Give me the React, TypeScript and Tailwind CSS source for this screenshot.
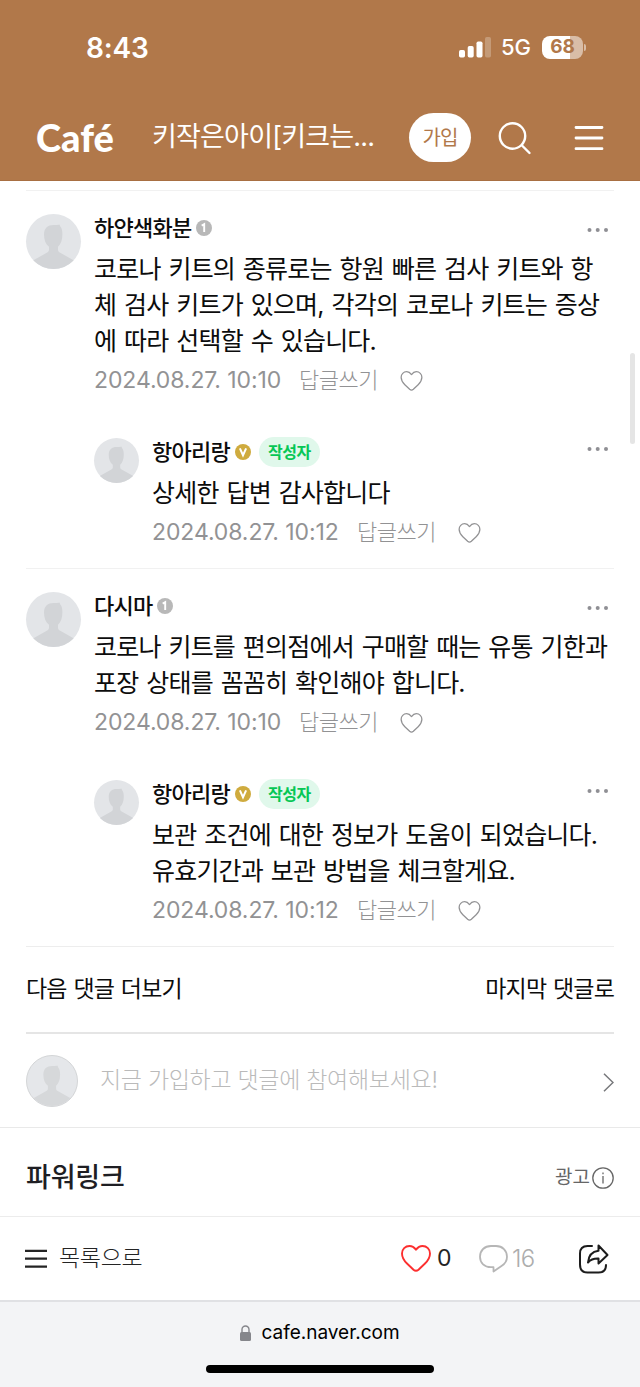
import { ReactNode } from 'react';

type Comment = {
  name: string;
  badge: 'level' | 'manager';
  author?: boolean;
  lines: string[];
  date: string;
};

const threads: { comment: Comment; reply: Comment }[] = [
  {
    comment: {
      name: '하얀색화분',
      badge: 'level',
      lines: [
        '코로나 키트의 종류로는 항원 빠른 검사 키트와 항',
        '체 검사 키트가 있으며, 각각의 코로나 키트는 증상',
        '에 따라 선택할 수 있습니다.',
      ],
      date: '2024.08.27. 10:10',
    },
    reply: {
      name: '항아리랑',
      badge: 'manager',
      author: true,
      lines: ['상세한 답변 감사합니다'],
      date: '2024.08.27. 10:12',
    },
  },
  {
    comment: {
      name: '다시마',
      badge: 'level',
      lines: ['코로나 키트를 편의점에서 구매할 때는 유통 기한과', '포장 상태를 꼼꼼히 확인해야 합니다.'],
      date: '2024.08.27. 10:10',
    },
    reply: {
      name: '항아리랑',
      badge: 'manager',
      author: true,
      lines: ['보관 조건에 대한 정보가 도움이 되었습니다.', '유효기간과 보관 방법을 체크할게요.'],
      date: '2024.08.27. 10:12',
    },
  },
];

function Avatar({ className }: { className: string }) {
  return (
    <svg viewBox="0 0 55 55" className={`shrink-0 rounded-full bg-[#e3e5e8] text-[#d2d4d7] ${className}`}>
      <path
        fill="currentColor"
        d="M18 20.5c0-6.500 4-9.500 9.500-9.500 2.500 0 4.500-.5 6.500-.3-.3.8-.1 1.400.4 1.900 1.500 1.900 2 4.400 2 7.900 0 5.500-1.600 9.500-4.400 12.300v3c0 1.200.6 2 1.800 2.700L48 46.500V55H7v-8.500l14.200-8c1.200-.7 1.800-1.500 1.800-2.700v-3c-3.400-2.800-5-6.800-5-12.300z"
      />
    </svg>
  );
}

function LevelBadge() {
  return (
    <svg viewBox="0 0 16 16" className="h-4 w-4">
      <circle cx="8" cy="8" r="8" fill="#b8b8b8" />
      <path d="M5.700 5.600 8.200 4.200V12" fill="none" stroke="#fff" strokeWidth="1.900" />
    </svg>
  );
}

function ManagerBadge() {
  return (
    <svg viewBox="0 0 16 16" className="h-4 w-4">
      <circle cx="8" cy="8" r="8" fill="#cfab3e" />
      <path d="M4.900 4.300 8 11.200l3.100-6.900" fill="none" stroke="#fff" strokeWidth="2" />
    </svg>
  );
}

function HeartIcon({ className, strokeWidth }: { className: string; strokeWidth: number }) {
  return (
    <svg viewBox="0 0 30 27" className={className} fill="none" stroke="currentColor" strokeWidth={strokeWidth} strokeLinejoin="round">
      <path d="M15 4.800C12.800 1.800 10.500 1 8.500 1 4.200 1 1 4.300 1 8.500 1 12.500 3 15.600 6 18.500l6.500 6.200c1.800 1.600 3.200 1.600 5 0l6.500-6.200c3-2.900 5-6 5-10C29 4.300 25.800 1 21.500 1c-2 0-4.300.8-6.500 3.800z" />
    </svg>
  );
}

function CommentBody({ comment, more, children }: { comment: Comment; more: string; children?: ReactNode }) {
  return (
    <div className="min-w-0 flex-1">
      <div className="flex h-[30px] items-center">
        <span className="mr-[5px] text-[22px] font-medium tracking-[-0.75px]">{comment.name}</span>
        {comment.badge === 'level' ? <LevelBadge /> : <ManagerBadge />}
        {comment.author && (
          <span className="ml-2 flex h-[30px] items-center rounded-full bg-[#e0f8eb] px-[9px] text-[16px] font-bold tracking-[-0.4px] text-[#06c755]">
            작성자
          </span>
        )}
        <svg viewBox="0 0 22 4" className={`ml-auto mr-[5px] h-1 w-[22px] ${more}`} fill="#8f8f94">
          <circle cx="2.500" cy="2" r="2" />
          <circle cx="10.700" cy="2" r="2" />
          <circle cx="19" cy="2" r="2" />
        </svg>
      </div>
      <div className="mt-2 text-[25px] leading-9 tracking-[-0.8px] whitespace-nowrap [word-spacing:1.6px]">
        {comment.lines.map((line) => (
          <p key={line}>{line}</p>
        ))}
      </div>
      <div className="mt-1.5 flex h-[30px] items-center text-[#929294]">
        <span className="w-[205px] text-[23px] tracking-[-0.1px] whitespace-nowrap">{comment.date}</span>
        <span className="w-[101px] text-[22px] font-light tracking-[-0.5px]">답글쓰기</span>
        <HeartIcon className="mt-0.5 h-5 w-[23px]" strokeWidth={1.7} />
      </div>
      {children}
    </div>
  );
}

export default function App() {
  return (
    <div className="relative flex h-[1387px] w-[640px] flex-col overflow-hidden bg-white font-['Inter','Noto_Sans_CJK_KR',sans-serif] text-[#0c0c0c]">
      <header className="h-[181px] shrink-0 border-b border-[#a86f42] bg-[#b1784a] text-white">
        <div className="flex h-[95px] items-center pr-[54px] pl-[86px]">
          <span className="text-[28px] font-semibold tracking-[-0.2px]">8:43</span>
          <svg viewBox="0 0 32 21" className="ml-auto h-[21px] w-8" fill="#fff">
            <rect x="0" y="13" width="6" height="7.500" rx="1.700" />
            <rect x="8.700" y="9" width="6" height="11.500" rx="1.700" />
            <rect x="17.500" y="4.500" width="6" height="16" rx="1.700" />
            <rect x="26" y="0" width="6" height="20.500" rx="1.700" opacity=".25" />
          </svg>
          <span className="ml-2.5 text-[22px] font-medium">5G</span>
          <div className="ml-[11px] flex items-center">
            <div className="flex h-[23px] w-[41px] items-center justify-center rounded-[8px] bg-linear-to-r from-white from-68% to-[#d9bda7] to-68% text-[19px] font-bold text-[#b1784a]">
              68
            </div>
            <span className="ml-px h-[7px] w-[2px] rounded-r-full bg-[#d9bda7]" />
          </div>
        </div>
        <div className="flex h-[85px] items-center pr-9 pl-9">
          <span className="w-[116px] font-['Lato',sans-serif] text-[38px] font-black">Café</span>
          <span className="w-[257px] text-[27px] tracking-[-0.8px] whitespace-nowrap">키작은아이[키크는...</span>
          <span className="flex h-[49px] w-[62px] items-center justify-center rounded-[25px] bg-white text-[20px] tracking-[-0.8px] text-[#b1784a]">
            가입
          </span>
          <svg viewBox="0 0 34 34" className="ml-[27px] h-[34px] w-[34px]" fill="none" stroke="#fff" strokeWidth="2.400" strokeLinecap="round">
            <circle cx="14.500" cy="15" r="12.700" />
            <path d="m24 24.500 7.500 7.500" />
          </svg>
          <svg viewBox="0 0 30 26" className="ml-auto h-[26px] w-[30px]" stroke="#fff" strokeWidth="2.800" strokeLinecap="round">
            <path d="M2 2.500h26M2 13h26M2 23.700h26" />
          </svg>
        </div>
      </header>

      <main className="mt-[9px] px-[26px]">
        {threads.map(({ comment, reply }) => (
          <section key={comment.name} className="flex border-t border-[#f1f1f1] pt-[22px] pb-[21px]">
            <Avatar className="mt-px mr-[13px] h-[55px] w-[55px]" />
            <CommentBody comment={comment} more="mt-1">
              <div className="mt-[42px] flex">
                <Avatar className="mt-px mr-[13px] h-[45px] w-[45px]" />
                <CommentBody comment={reply} more="-mt-1.5" />
              </div>
            </CommentBody>
          </section>
        ))}

        <div className="flex h-[88px] items-center justify-between border-t border-b-2 border-t-[#ededed] border-b-[#e5e5e5] text-[23px] tracking-[-0.8px] [word-spacing:1px]">
          <span>다음 댓글 더보기</span>
          <span>마지막 댓글로</span>
        </div>
        <div className="flex h-[93px] items-center">
          <Avatar className="h-[52px] w-[52px] border-[1.500px] border-[#cfd1d3] opacity-90" />
          <span className="ml-[22px] text-[23px] font-light tracking-[-0.3px] text-[#bababa]">지금 가입하고 댓글에 참여해보세요!</span>
          <svg viewBox="0 0 11 19" className="mt-1 ml-auto h-[19px] w-[11px]" fill="none" stroke="#77787b" strokeWidth="1.500">
            <path d="m1 .7 9 8.800-9 8.800" />
          </svg>
        </div>
      </main>

      <section className="flex h-[89px] items-center justify-between border-t border-[#e9e9e9] px-[26px] pt-3">
        <h2 className="text-[27px] font-medium tracking-[-0.2px] text-[#1e1e23]">파워링크</h2>
        <div className="flex items-center gap-0.5 text-[19px] text-[#666]">
          광고
          <svg viewBox="0 0 22 22" className="h-[22px] w-[22px]" fill="none" stroke="currentColor" strokeWidth="1.300">
            <circle cx="11" cy="11" r="10.200" />
            <path d="M11 9v7.500M11 5.500v1.700" />
          </svg>
        </div>
      </section>

      <nav className="flex h-[84px] items-center border-t border-[#ececec] pr-[31px] pl-[25px] text-[#242424]">
        <svg viewBox="0 0 22 20" className="h-5 w-[22px]" stroke="currentColor" strokeWidth="2.200">
          <path d="M0 1.800h22M0 9.700h22M0 17.600h22" />
        </svg>
        <span className="ml-3 text-[23px] font-light tracking-[-0.3px]">목록으로</span>
        <HeartIcon className="ml-auto h-[27px] w-[30px] text-[#fc2f2f]" strokeWidth={1.9} />
        <span className="ml-[6px] w-[42px] text-[23px]">0</span>
        <svg viewBox="0 0 29 28" className="h-7 w-[29px]" fill="none" stroke="#b6b6b6" strokeWidth="1.800" strokeLinejoin="round">
          <path d="M12 1h5c6.500 0 11 4.500 11 10.700 0 4-2.300 7.300-5.500 9.300L14.500 26.500v-4.300H12C5.500 22.200 1 18 1 11.700S5.500 1 12 1z" />
        </svg>
        <span className="ml-1 w-[66px] text-[24px] font-light tracking-[-0.8px] text-[#adadad]">16</span>
        <svg viewBox="0 0 31 30" className="h-[30px] w-[31px]" fill="none" stroke="#1c1c1c" strokeWidth="2" strokeLinecap="round" strokeLinejoin="round">
          <path d="M14 2H9.500C4.500 2 2 4.500 2 9.500v11C2 26 4.500 28.500 9.500 28.500h11c5 0 7.500-2.500 7.500-7.500" />
          <path d="M20.500 1.500 29.500 11l-9 8.500v-5c-5-.2-8 1-10.500 4 .5-6.500 4-11 10.500-11.800z" />
        </svg>
      </nav>

      <footer className="flex flex-1 flex-col items-center border-t-2 border-[#e0e1e4] bg-[#f3f4f6] text-black">
        <div className="mt-[15px] flex h-8 items-center">
          <svg viewBox="0 0 11 16" className="mr-2.5 h-4 w-[11px]">
            <rect y="7" width="11" height="9" rx="1.500" fill="#85868b" />
            <path d="M2 8V4.500a3.500 3.500 0 0 1 7 0V8" fill="none" stroke="#85868b" strokeWidth="1.400" />
          </svg>
          <span className="text-[19px]">cafe.naver.com</span>
        </div>
        <div className="mt-4 h-2 w-[228px] rounded-full bg-black" />
      </footer>

      {/* scroll thumb */}
      <div className="absolute top-[353px] left-[630px] h-[91px] w-[5px] rounded-full bg-[#e5e5e5]" />
    </div>
  );
}
